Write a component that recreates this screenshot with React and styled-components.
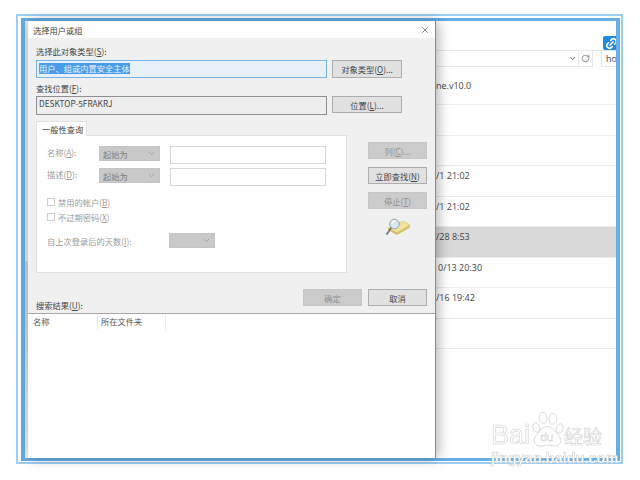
import React from 'react';
import styled, { createGlobalStyle } from 'styled-components';
import { ChevronDown, Link2, RotateCw, X } from 'lucide-react';

const CJK = `"Noto Sans CJK SC", "Liberation Sans", sans-serif`;

const Global = createGlobalStyle`
  html, body { margin: 0; background: #fff; }
  body { font-family: ${CJK}; font-size: 8.25px; color: #333; }
  * { box-sizing: border-box; }
`;

const Page = styled.div`
  position: relative;
  width: 640px;
  height: 480px;
  padding: 14px 17px 16px 16px;
  overflow: hidden;
  filter: blur(0.45px);
`;

const OuterFrame = styled.div`
  height: 100%;
  border: 2px solid #9ccdf3;
  padding: 2px 1px 1px 3px;
`;

const InnerFrame = styled.div`
  height: 100%;
  display: flex;
  background: #fff;
  border: solid #64aee9;
  border-width: 3px 4px 3px 4px;
`;

const Strip = styled.div`
  width: 3px;
  flex: none;
  background: linear-gradient(#e9e9e9, #e9e9e9 55%, #d0d0d0 55%, #d8d8d8 70%, #f2f2f2);
`;

const Dialog = styled.div`
  position: relative;
  z-index: 1;
  width: 408px;
  flex: none;
  display: flex;
  flex-direction: column;
  background: #f0f0f0;
  border-right: 1px solid #5f95c6;
  box-shadow: 2px 0 12px rgba(0, 0, 0, 0.32);
`;

const TitleBar = styled.div`
  height: 17px;
  flex: none;
  display: flex;
  align-items: center;
  justify-content: space-between;
  padding: 0 5px 0 5px;
  background: #fff;
  color: #444;
`;

const Close = styled(X)`
  width: 10px;
  height: 10px;
  color: #444;
  stroke-width: 1.5;
`;

const Body = styled.div`
  height: 275px;
  flex: none;
  padding: 7px 8px 0 8px;
`;

const Label = styled.div`
  height: 13px;
  line-height: 13px;
  color: #444;
  u { text-underline-offset: 1px; }
`;

const FieldRow = styled.div`
  display: flex;
  gap: 5px;
  align-items: flex-start;
  margin: ${p => p.$margin || '2px 0 4px'};
`;

const Field = styled.div`
  width: 291px;
  height: ${p => p.$h || 18}px;
  padding: ${p => (p.$active ? '1px 2px' : '0 2px')};
  line-height: 13px;
  border: 1px solid ${p => (p.$active ? '#78b4e6' : '#8f8f8f')};
  background: ${p => (p.$active ? '#e8f1f8' : '#eeeeee')};
  color: #444;
`;

const Selected = styled.span`
  display: inline-block;
  height: 11px;
  line-height: 11px;
  background: #4a9bea;
  color: #e8f3fc;
`;

const Button = styled.div`
  width: ${p => p.$w || 59}px;
  height: ${p => p.$h || 17}px;
  display: flex;
  align-items: center;
  justify-content: center;
  background: ${p => (p.$disabled ? '#cbcbcb' : '#e1e1e1')};
  border: 1px solid ${p => (p.$disabled ? '#c6c6c6' : '#adadad')};
  color: ${p => (p.$disabled ? '#909090' : '#444')};
  u { text-underline-offset: 1px; }
`;

const QueryArea = styled.div`
  display: flex;
`;

const QueryLeft = styled.div`
  width: 311px;
  flex: none;
`;

const Tab = styled.div`
  width: 51px;
  height: 15px;
  padding-left: 5px;
  line-height: 14px;
  background: #fff;
  border: 1px solid #e2e2e2;
  border-bottom: 0;
  margin-bottom: -1px;
  position: relative;
  color: #444;
`;

const Panel = styled.div`
  height: 138px;
  padding: 10px 20px 0 10px;
  background: #fff;
  border: 1px solid #dfdfdf;
  color: #9a9a9a;
`;

const QueryRow = styled.div`
  display: flex;
  align-items: flex-start;
  margin-bottom: ${p => p.$mb || 4}px;
  u { text-underline-offset: 1px; }
`;

const RowLabel = styled.div`
  width: 52px;
  padding-top: 0;
  line-height: 13px;
`;

const Select = styled.div`
  width: ${p => p.$w || 61}px;
  height: 15px;
  margin-right: 10px;
  padding: 0 3px;
  display: flex;
  align-items: center;
  justify-content: space-between;
  background: #c9c9c9;
  border: 1px solid #c4c4c4;
  color: #7f7f7f;
`;

const Caret = styled(ChevronDown)`
  width: 9px;
  height: 9px;
  color: #9b9b9b;
`;

const TextBox = styled.div`
  width: 156px;
  height: 18px;
  background: #fff;
  border: 1px solid #d6d6d6;
`;

const Check = styled.label`
  height: 15px;
  display: flex;
  align-items: center;
  gap: 3px;
  u { text-underline-offset: 1px; }
`;

const Box = styled.span`
  width: 8px;
  height: 8px;
  background: #fff;
  border: 1px solid #cfcfcf;
`;

const DaysRow = styled.div`
  display: flex;
  align-items: center;
  margin-top: 9px;
  u { text-underline-offset: 1px; }
`;

const DaysLabel = styled.div`
  width: 122px;
`;

const SideColumn = styled.div`
  margin-left: 21px;
  padding-top: 21px;
  display: flex;
  flex-direction: column;
  gap: 8px;
`;

const SearchArt = styled.svg`
  width: 26px;
  height: 18px;
  margin: 1px 0 0 17px;
`;

const Footer = styled.div`
  display: flex;
  justify-content: flex-end;
  gap: 6px;
  margin: 16px 0 0;
`;

const ResultsLabel = styled(Label)`
  margin-top: -6px;
  height: 10px;
  line-height: 10px;
`;

const Results = styled.div`
  flex: 1;
  background: #fff;
  border-top: 1px solid #a8a8a8;
`;

const Columns = styled.div`
  display: flex;
  height: 16px;
  line-height: 15px;
  color: #555;
`;

const Column = styled.div`
  width: ${p => p.$w}px;
  padding-left: ${p => p.$pad}px;
  border-right: 1px solid #ececec;
`;

const Files = styled.div`
  flex: 1;
  min-width: 0;
  display: flex;
  flex-direction: column;
  overflow: hidden;
  font-family: "Open Sans", "Liberation Sans", sans-serif;
  font-size: 9px;
  color: #444;
`;

const ShareRow = styled.div`
  height: 29px;
  flex: none;
  display: flex;
  align-items: flex-end;
  justify-content: flex-end;
`;

const ShareBadge = styled.div`
  width: 13px;
  height: 14px;
  display: flex;
  align-items: center;
  overflow: hidden;
  padding-left: 2px;
  background: #1f8ae3;
  border-radius: 2px 0 0 2px;
  color: #fff;
`;

const ShareIcon = styled(Link2)`
  width: 13px;
  height: 13px;
  flex: none;
  transform: rotate(-45deg);
  stroke-width: 3;
`;

const AddressRow = styled.div`
  height: 17px;
  flex: none;
  display: flex;
  border-top: 1px solid #e8e8e8;
  margin-bottom: 8px;
`;

const Address = styled.div`
  width: 142px;
  display: flex;
  align-items: center;
  justify-content: flex-end;
  padding-right: 1px;
  border-bottom: 1px solid #e8e8e8;
`;

const Refresh = styled.div`
  width: 15px;
  display: flex;
  align-items: center;
  justify-content: center;
  border: 1px solid #e8e8e8;
  border-top: 0;
  color: #777;
`;

const SearchBox = styled.div`
  margin-left: 8px;
  width: 15px;
  padding-left: 4px;
  line-height: 15px;
  white-space: nowrap;
  overflow: hidden;
  border: 1px solid #e8e8e8;
  border-width: 0 0 1px 1px;
`;

const FileRow = styled.div`
  height: ${p => p.$h || 30.5}px;
  flex: none;
  padding: ${p => (p.$first ? 4 : 3)}px 0 0 ${p => p.$pad || 0}px;
  line-height: 13px;
  white-space: nowrap;
  background: ${p => (p.$active ? '#d9d9d9' : 'transparent')};
  border-bottom: 1px solid #ececec;
`;

const Watermark = styled.div`
  position: absolute;
  left: 491px;
  top: 411px;
  width: 116px;
  color: #fff;
  -webkit-text-stroke: 0.6px #d0d0d0;
  pointer-events: none;
`;

const MarkTop = styled.div`
  display: flex;
  align-items: flex-end;
  height: 37px;
  font-family: "Liberation Sans", sans-serif;
  font-size: 27px;
  line-height: 25px;
`;

const Paw = styled.svg`
  width: 36px;
  height: 37px;
  flex: none;
  margin: 0 -1px;
`;

const MarkCjk = styled.span`
  font-family: ${CJK};
  font-size: 19px;
  line-height: 24px;
`;

const MarkUrl = styled.div`
  margin-top: 3px;
  font-family: "Liberation Sans", sans-serif;
  font-size: 14.5px;
  font-weight: 700;
  line-height: 14px;
  white-space: nowrap;
`;

const fileRows = [
  { text: 'ne.v10.0', first: true, h: 30 },
  { text: '' },
  { text: '' },
  { text: '/1 21:02' },
  { text: '/1 21:02' },
  { text: '/28 8:53', active: true },
  { text: '0/13 20:30', pad: 2 },
  { text: '/16 19:42' },
  { text: '', h: 30 },
];

export default function App() {
  return (
    <Page>
      <Global />
      <OuterFrame>
        <InnerFrame>
          <Strip />
          <Dialog>
            <TitleBar>
              选择用户或组
              <Close />
            </TitleBar>
            <Body>
              <Label>选择此对象类型(<u>S</u>):</Label>
              <FieldRow>
                <Field $active><Selected>用户、组或内置安全主体</Selected></Field>
                <Button $w={70} $h={18}><span>对象类型(<u>O</u>)...</span></Button>
              </FieldRow>
              <Label>查找位置(<u>F</u>):</Label>
              <FieldRow $margin="1px 0 6px">
                <Field $h={19}>DESKTOP-5FRAKRJ</Field>
                <Button $w={70} $h={17}><span>位置(<u>L</u>)...</span></Button>
              </FieldRow>
              <QueryArea>
                <QueryLeft>
                  <Tab>一般性查询</Tab>
                  <Panel>
                    <QueryRow $mb={4}>
                      <RowLabel>名称(<u>A</u>):</RowLabel>
                      <Select>起始为<Caret /></Select>
                      <TextBox />
                    </QueryRow>
                    <QueryRow $mb={8}>
                      <RowLabel>描述(<u>D</u>):</RowLabel>
                      <Select>起始为<Caret /></Select>
                      <TextBox />
                    </QueryRow>
                    <Check><Box /><span>禁用的帐户(<u>B</u>)</span></Check>
                    <Check><Box /><span>不过期密码(<u>X</u>)</span></Check>
                    <DaysRow>
                      <DaysLabel>自上次登录后的天数(<u>I</u>):</DaysLabel>
                      <Select $w={46}><span /><Caret /></Select>
                    </DaysRow>
                  </Panel>
                </QueryLeft>
                <SideColumn>
                  <Button $disabled><span>列(<u>C</u>)...</span></Button>
                  <Button><span>立即查找(<u>N</u>)</span></Button>
                  <Button $disabled><span>停止(<u>T</u>)</span></Button>
                  <SearchArt viewBox="0 0 26 18">
                    <path d="M3 10 L12 14.5 L25 7 L25 9.5 L12 17 L3 12 Z" fill="#d6bd62" />
                    <path d="M3 10 L18 3 L25 7 L12 14.5 Z" fill="#f3e39a" stroke="#d0b964" strokeWidth="0.5" />
                    <line x1="6" y1="10" x2="2" y2="16" stroke="#6d7580" strokeWidth="1.7" strokeLinecap="round" />
                    <circle cx="9.5" cy="6" r="4.8" fill="#d8e8f2" stroke="#97a4ae" strokeWidth="1" />
                    <path d="M7 6 A3 3 0 0 1 10 3" fill="none" stroke="#fff" strokeWidth="1" />
                  </SearchArt>
                </SideColumn>
              </QueryArea>
              <Footer>
                <Button $disabled>确定</Button>
                <Button>取消</Button>
              </Footer>
              <ResultsLabel>搜索结果(<u>U</u>):</ResultsLabel>
            </Body>
            <Results>
              <Columns>
                <Column $w={70} $pad={5}>名称</Column>
                <Column $w={68} $pad={3}>所在文件夹</Column>
              </Columns>
            </Results>
          </Dialog>
          <Files>
            <ShareRow>
              <ShareBadge><ShareIcon /></ShareBadge>
            </ShareRow>
            <AddressRow>
              <Address><ChevronDown size={9} /></Address>
              <Refresh><RotateCw size={9} /></Refresh>
              <SearchBox>ho</SearchBox>
            </AddressRow>
            {fileRows.map((row, i) => (
              <FileRow key={i} $first={row.first} $h={row.h} $pad={row.pad} $active={row.active}>
                {row.text}
              </FileRow>
            ))}
          </Files>
        </InnerFrame>
      </OuterFrame>
      <Watermark>
        <MarkTop>
          Bai
          <Paw viewBox="0 0 36 38">
            <g fill="#fff" stroke="#d0d0d0" strokeWidth="0.8">
              <ellipse cx="7" cy="17" rx="3.4" ry="5" transform="rotate(-20 7 17)" />
              <ellipse cx="14" cy="7" rx="4" ry="5.6" />
              <ellipse cx="24" cy="8" rx="4" ry="5.6" />
              <ellipse cx="31" cy="18" rx="3.4" ry="5" transform="rotate(20 31 18)" />
              <path d="M18 16 C12 16 11 21 7 25 C3 30 5 36 11 36 C14 36 16 35 18 35 C21 35 23 36 26 36 C32 36 34 30 30 25 C26 21 24 16 18 16 Z" />
            </g>
            <text x="18" y="31" textAnchor="middle" fontFamily="Liberation Sans" fontSize="12" fill="#fff" stroke="#d0d0d0" strokeWidth="0.5">du</text>
          </Paw>
          <MarkCjk>经验</MarkCjk>
        </MarkTop>
        <MarkUrl>jingyan.baidu.com</MarkUrl>
      </Watermark>
    </Page>
  );
}
